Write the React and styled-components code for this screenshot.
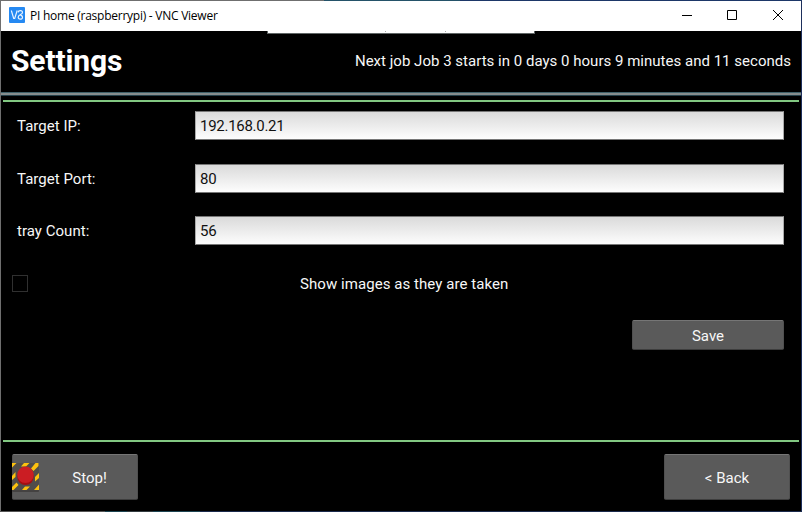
import React, { useState } from "react";
import styled, { createGlobalStyle } from "styled-components";

const GlobalStyle = createGlobalStyle`
  *, *::before, *::after { box-sizing: border-box; }
  html, body { margin: 0; padding: 0; background: #000; }
  body { overflow: hidden; }
`;

const Window = styled.main`
  display: grid;
  grid-template-rows: 30px 61px 4px 4px 2px 338px 2px 1fr;
  width: 802px;
  height: 512px;
  padding: 1px;
  background:
    linear-gradient(#000, #000) 1px 1px / 800px 510px no-repeat,
    linear-gradient(90deg, #6f6f6f 0 324px, #245269 324px 460px, #1d3768 460px) 0 0 / 100% 1px no-repeat,
    linear-gradient(90deg, #555 0 105px, #1b4350 105px 127px, #333c40 127px 153px, #1d4452 153px 200px, #1b2a4c 200px) 0 511px / 100% 1px no-repeat,
    linear-gradient(#6f6f6f, #6f6f6f) 0 0 / 1px 100% no-repeat,
    #1d2f5c;
  color: #f7f7f7;
  font-family: Roboto, sans-serif;
  font-size: 15px;
  line-height: 18px;
`;

const TitleBar = styled.div`
  display: flex;
  align-items: center;
  padding-left: 8px;
  background: #fff;
  color: #000;
`;

const AppIcon = styled.svg`
  width: 16px;
  height: 16px;
  margin: -2px 5px 0 0;
`;

const WindowTitle = styled.span`
  flex: 1;
  font: 12px/16px "Open Sans", "Noto Sans", sans-serif;
  letter-spacing: -0.25px;
  white-space: pre;
`;

const Controls = styled.div`
  display: flex;
`;

const WindowButton = styled.button`
  display: grid;
  place-items: center;
  width: 46px;
  height: 30px;
  padding: 0 0 2px ${(p) => p.$nudge || 0}px;
  border: 0;
  background: none;
`;

const ToolbarTab = styled.div`
  position: absolute;
  top: 31px;
  left: 267px;
  width: 268px;
  height: 3px;
  background:
    linear-gradient(#aaa, #aaa) 117px 0 / 1px 1px no-repeat,
    linear-gradient(#aaa, #aaa) 177px 0 / 1px 1px no-repeat,
    #fff;
  border: solid #5f6565;
  border-width: 0 1px 1px;
`;

const Header = styled.header`
  display: flex;
  align-items: center;
  justify-content: space-between;
  padding: 0 10px 2px;
`;

const Heading = styled.h1`
  margin: 0;
  font-size: 30px;
  line-height: 36px;
  font-weight: 700;
  letter-spacing: -0.12px;
  color: #fff;
`;

const JobStatus = styled.span`
  letter-spacing: 0.016px;
  white-space: nowrap;
`;

const Divider = styled.div`
  background: linear-gradient(#40616a 0 1px, #868d8d 1px 3px, #24404a 3px);
`;

const Rule = styled.div`
  margin: 0 2px;
  background: #82c882;
`;

const Form = styled.form`
  display: grid;
  grid-template-columns: 183px 589px;
  grid-template-rows: 29px 29px 29px 28px 30px;
  row-gap: 23.6px;
  align-content: start;
  padding: 9px 0 0 11px;
`;

const Label = styled.label`
  padding-left: 5px;
  line-height: 31px;
  letter-spacing: 0.03px;
`;

const TextField = styled.input`
  width: 589px;
  height: 29px;
  padding: 1px 4px 0;
  border: 1px solid #777;
  border-left-color: #aaa;
  border-right-color: #aaa;
  background: linear-gradient(#dadada, #fdfdfd);
  color: #111;
  font: 15px/18px Roboto, sans-serif;
  letter-spacing: -0.28px;
  outline: 0;
`;

const CheckRow = styled.label`
  grid-column: 1 / -1;
  display: flex;
  align-items: center;
`;

const Checkbox = styled.input`
  appearance: none;
  width: 16px;
  height: 17px;
  margin: 1px 0 0;
  border: 1px solid #303030;
  background: ${(p) => (p.checked ? "#777" : "#000")};
`;

const CheckText = styled.span`
  margin-left: 272px;
  padding-top: 2px;
  letter-spacing: 0.06px;
`;

const Button = styled.button`
  display: flex;
  align-items: center;
  justify-content: center;
  width: ${(p) => p.$width}px;
  height: ${(p) => p.$height}px;
  padding: 2px 0 0;
  border: 1px solid #505050;
  border-top-color: #767676;
  border-bottom-color: #3d3d3d;
  border-radius: 2px;
  background: #5a5a5a;
  color: #f7f7f7;
  font: 15px/18px Roboto, sans-serif;
`;

const SaveSlot = styled.div`
  grid-column: 1 / -1;
  display: flex;
  justify-content: flex-end;
`;

const Footer = styled.footer`
  display: flex;
  align-items: flex-start;
  justify-content: space-between;
  padding: 12px 11px 0;
`;

const StopButton = styled(Button)`
  justify-content: flex-start;
`;

const StopIcon = styled.svg`
  width: 27px;
  height: 29px;
  margin: -2px 0 0 -1px;
  flex: none;
`;

const StopLabel = styled.span`
  flex: 1;
  padding-left: 3px;
  text-align: center;
`;

function VncLogo() {
  return (
    <AppIcon viewBox="0 0 16 16" aria-hidden="true">
      <rect width="16" height="16" rx="1" fill="#2589f2" />
      <path
        d="M2.3 3.5 4.7 11.5H5.7L8.2 3.5M9.2 5.4C9.4 3 13.5 3 13.5 5.5C13.5 7.8 9.2 7.4 9.2 10.3C9.2 12.8 13.5 12.8 13.5 10.4C13.5 8.6 12.2 8 10.8 7.6"
        fill="none"
        stroke="#e9f3ff"
        strokeWidth="1.2"
      />
    </AppIcon>
  );
}

function EmergencyIcon() {
  return (
    <StopIcon viewBox="0 0 27 29" aria-hidden="true">
      <rect width="27" height="29" rx="1" fill="#444241" />
      <rect width="27" height="27" fill="#504d4b" />
      <path
        d="M0 0h4.5L0 4.5zM12 0h5.5l-3.5 3.5h-5zM23.5 0h3v3l-5 5-2.5-2.5zM0 13l3.5-4v5L0 17zM27 10v5l-4 3.5V14zM0 24l4.5-4.5 2 2.5L1.5 27H0zM13 23.5h5L14.5 27H10zM27 21.5V27h-5z"
        fill="#fdc20f"
      />
      <ellipse cx="13.5" cy="13.8" rx="8.2" ry="8.3" fill="#a40f12" />
      <ellipse cx="13.5" cy="11.8" rx="8.2" ry="8.3" fill="#cb1d23" />
    </StopIcon>
  );
}

const FIELDS = [
  { id: "ip", label: "Target IP:", value: "192.168.0.21" },
  { id: "port", label: "Target Port:", value: "80" },
  { id: "trays", label: "tray Count:", value: "56" },
];

export default function App() {
  const [showImages, setShowImages] = useState(false);
  return (
    <>
      <GlobalStyle />
      <Window>
        <TitleBar>
          <VncLogo />
          <WindowTitle>PI home (raspberrypi) - VNC Viewer</WindowTitle>
          <Controls>
            <WindowButton $nudge={2} aria-label="Minimize">
              <svg width="10" height="10"><path d="M0 5.5h10" stroke="#000" /></svg>
            </WindowButton>
            <WindowButton aria-label="Maximize">
              <svg width="10" height="10"><path d="M.5.5h9v9h-9z" fill="none" stroke="#000" /></svg>
            </WindowButton>
            <WindowButton aria-label="Close">
              <svg width="10" height="10"><path d="M0 0 10 10M10 0 0 10" stroke="#000" /></svg>
            </WindowButton>
          </Controls>
        </TitleBar>
        <ToolbarTab />
        <Header>
          <Heading>Settings</Heading>
          <JobStatus>Next job Job 3 starts in 0 days 0 hours 9 minutes and 11 seconds</JobStatus>
        </Header>
        <Divider />
        <span />
        <Rule />
        <Form onSubmit={(e) => e.preventDefault()}>
          {FIELDS.map((f) => (
            <React.Fragment key={f.id}>
              <Label htmlFor={f.id}>{f.label}</Label>
              <TextField id={f.id} defaultValue={f.value} />
            </React.Fragment>
          ))}
          <CheckRow>
            <Checkbox
              type="checkbox"
              checked={showImages}
              onChange={(e) => setShowImages(e.target.checked)}
            />
            <CheckText>Show images as they are taken</CheckText>
          </CheckRow>
          <SaveSlot>
            <Button $width={152} $height={30}>Save</Button>
          </SaveSlot>
        </Form>
        <Rule />
        <Footer>
          <StopButton type="button" $width={126} $height={46}>
            <EmergencyIcon />
            <StopLabel>Stop!</StopLabel>
          </StopButton>
          <Button type="button" $width={126} $height={46}>&lt; Back</Button>
        </Footer>
      </Window>
    </>
  );
}
